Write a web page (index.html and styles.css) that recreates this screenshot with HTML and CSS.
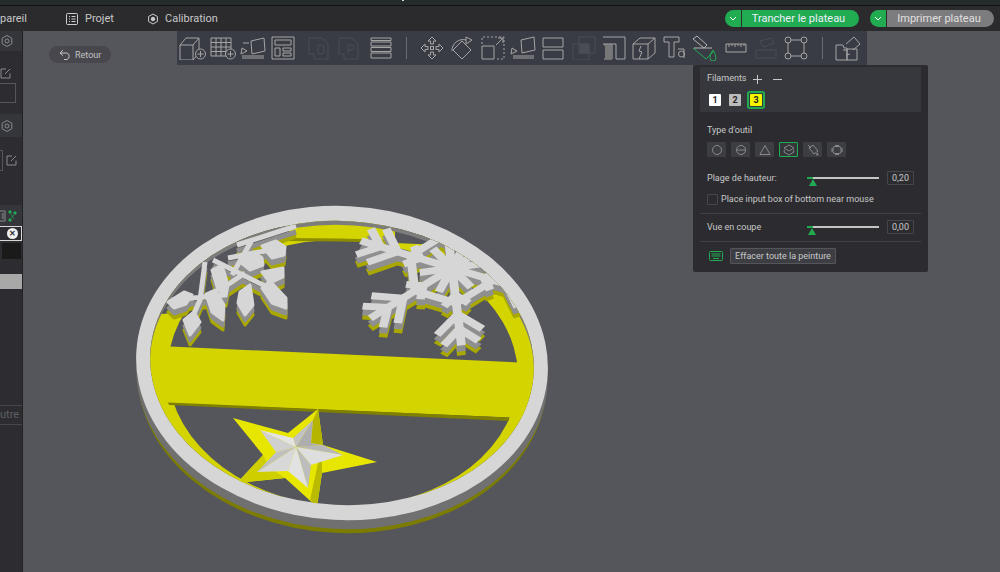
FILE: index.html
```html
<!DOCTYPE html>
<html lang="fr">
<head>
    <meta charset="UTF-8">
    <title>Peinture</title>
    <link rel="stylesheet" href="styles.css">
</head>
<body>
    <div class="topstrip"><span class="topmark"></span></div>
    <div class="menubar">
        <div class="tab tab-device">pareil</div>
        <div class="tab tab-project">
            <svg width="14" height="14" viewBox="0 0 14 14" class="ico"><rect x="1.5" y="1.5" width="11" height="11" rx="1"/><path d="M4 4.500h1M6.500 4.500h4M4 7h1M6.500 7h4M4 9.500h1M6.500 9.500h4"/></svg>
            Projet
        </div>
        <div class="tab tab-calib">
            <svg width="12" height="12" viewBox="0 0 12 12" class="ico"><path d="M6 1l4.400 2.500v5L6 11 1.600 8.500v-5z"/><circle cx="6" cy="6" r="1.800" fill="#ccc"/></svg>
            Calibration
        </div>
        <div class="spacer"></div>
        <div class="splitbtn slice">
            <span class="chev"><svg width="8" height="5" viewBox="0 0 8 5"><path d="M1 1l3 3 3-3" fill="none" stroke="#fff"/></svg></span>
            <span class="label">Trancher le plateau</span>
        </div>
        <div class="splitbtn print">
            <span class="chev"><svg width="8" height="5" viewBox="0 0 8 5"><path d="M1 1l3 3 3-3" fill="none" stroke="#fff"/></svg></span>
            <span class="label">Imprimer plateau</span>
        </div>
    </div>

    <div class="main">
        <div class="sidebar">
            <div class="side-head">
                <svg width="14" height="14" viewBox="0 0 14 14" class="side-ico"><path d="M7 1.500l4.800 2.700v5.600L7 12.500 2.200 9.800V4.200z"/><circle cx="7" cy="7" r="2"/></svg>
            </div>
            <div class="side-block one">
                <div class="side-edit">
                    <svg width="12" height="12" viewBox="0 0 12 12" class="side-ico"><path d="M10 6.500V11H1V2h5M5 7l5-5"/></svg>
                </div>
                <div class="side-box"></div>
            </div>
            <div class="side-head two">
                <svg width="14" height="14" viewBox="0 0 14 14" class="side-ico"><path d="M7 1.500l4.800 2.700v5.600L7 12.500 2.200 9.800V4.200z"/><circle cx="7" cy="7" r="2"/></svg>
            </div>
            <div class="side-block three">
                <div class="side-stub"></div>
                <svg width="12" height="12" viewBox="0 0 12 12" class="side-ico"><path d="M10 6.500V11H1V2h5M5 7l5-5"/></svg>
            </div>
            <div class="side-head four">
                <svg width="6" height="12" viewBox="0 0 6 12" class="side-ico"><path d="M0 1h5v10H0M1.500 4H4M1.500 6H4M1.500 8H4"/></svg>
                <svg width="9" height="12" viewBox="0 0 9 12" class="side-green"><circle cx="2" cy="2" r="1.300"/><circle cx="7" cy="3" r="1.300"/><circle cx="2" cy="10" r="1.300"/><path d="M3 4l3 5M6 5L3 8"/></svg>
            </div>
            <div class="side-chip"><span class="chip-x">&#10005;</span></div>
            <div class="side-black"><div class="black-box"></div></div>
            <div class="side-gray"></div>
            <div class="side-fill"></div>
            <div class="side-other">utre</div>
            <div class="side-end"></div>
        </div>

        <div class="viewport">
            <svg class="scene" viewBox="23 31 977 541" width="977" height="541">
                <defs>
                    <clipPath id="insideRing"><ellipse cx="342" cy="363" rx="192" ry="142" transform="rotate(3 342 363)"/></clipPath>
                    <g id="arm">
                        <path d="M0 0H97M58 0L80 -22M58 0L80 22M76 0L94 -17M76 0L94 17M44 0L22 38M0 0L27 16M34 0L46 -12M34 0L46 12"/>
                    </g>
                    <g id="bigFlake">
                        <use href="#arm"/><use href="#arm" transform="rotate(60)"/><use href="#arm" transform="rotate(120)"/>
                        <use href="#arm" transform="rotate(180)"/><use href="#arm" transform="rotate(240)"/><use href="#arm" transform="rotate(300)"/>
                        <circle r="14" stroke="none"/>
                    </g>
                    <g id="leaves">
                        <path fill="none" stroke-width="5" d="M237 245L296 226M213 260L273 290M252 240L232 275M245 273L220 290M205 262L200 300L192 318M172 300L225 295M270 250L228 258"/>
                        <path stroke-width="3" stroke-linejoin="round" d="M262 246L276 241L285 247L284 255L272 258ZM240 262L255 252L262 258L263 265L250 270ZM262 272L283 268L283 277L270 283ZM212 270L222 265L228 285L226 296L218 290ZM262 288L270 281L286 298L286 308L272 303ZM240 292L250 285L253 305L245 315L238 303ZM206 294L215 290L224 305L223 320L212 312ZM168 302L184 292L192 295L186 304L174 308ZM184 320L194 312L200 322L190 335Z"/>
                    </g>
                    <g id="flakes">
                        <use href="#leaves"/>
                        <use href="#bigFlake" transform="matrix(-.94 -.28 -.43 .76 452 268)" stroke-width="8.500"/>
                    </g>
                </defs>

                <!-- plate sides -->
                <ellipse cx="342" cy="377" rx="205" ry="156" transform="rotate(3 342 377)" fill="#7c7c00"/>
                <ellipse cx="342" cy="373" rx="206" ry="156" transform="rotate(3 342 373)" fill="#707070"/>
                <ellipse cx="342" cy="363" rx="206" ry="157" transform="rotate(3 342 363)" fill="#d6d6d6"/>

                <!-- inside of the ring -->
                <ellipse cx="342" cy="363" rx="192" ry="142" transform="rotate(3 342 363)" fill="#55555c"/>
                <g clip-path="url(#insideRing)">
                    <path fill-rule="evenodd" fill="#d4d400" d="M120 200H560V520H120ZM168 373a175 133 3 1 0 350 0a175 133 3 1 0 -350 0Z"/>
                    <path d="M285 238Q340 238 396 240V243Q340 241 285 241Z" fill="#8d8d00"/>
                    <!-- no yellow behind the flakes -->
                    <path d="M130 200H285L290 238L185 312L140 316ZM395 200H560V293H490L440 245L395 243Z" fill="#55555c"/>
                    <path fill-rule="evenodd" fill="#7d7d7d" d="M120 180H570V540H120ZM150 367a192 142 3 1 0 384 0a192 142 3 1 0 -384 0Z"/>
                    <path d="M160 346L530 363L525 418L160 403Z" fill="#d4d400"/>
                    <path d="M168 402.500L509 417.500V421L169 405Z" fill="#7f7f00"/>
                    <g>
                        <use href="#flakes" y="10" fill="#a8a800" stroke="#a8a800"/>
                        <use href="#flakes" y="6" fill="#8f8f8f" stroke="#8f8f8f"/>
                        <use href="#flakes" fill="#d6d6d6" stroke="#d6d6d6"/>
                    </g>
                    <!-- star -->
                    <path d="M318 409L323 445L377 462L322 473L317 507L285 478L237 483L263 455L233 418L288 433Z" fill="#e6e600"/>
                    <path d="M318 409L323 445L311 443L313 420Z" fill="#b5b500"/>
                    <path d="M322 473L317 507L310 500L322 445Z" fill="#b5b500" opacity=".9"/>
                    <path d="M237 483L263 455L270 468L285 478Z" fill="#cfcf00"/>
                    <path d="M313 420L296 447L293 438Z" fill="#c2c2c2"/>
                    <path d="M313 420L296 447L323 445L311 443Z" fill="#aeaeae"/>
                    <path d="M343 455L296 447L323 445Z" fill="#b8b8b8"/>
                    <path d="M343 455L296 447L311 465Z" fill="#dedede"/>
                    <path d="M308 488L296 447L311 465Z" fill="#bdbdbd"/>
                    <path d="M308 488L296 447L288 471Z" fill="#e2e2e2"/>
                    <path d="M257 472L296 447L288 471Z" fill="#d8d8d8"/>
                    <path d="M257 472L296 447L276 452Z" fill="#c0c0c0"/>
                    <path d="M260 430L296 447L276 452Z" fill="#d0d0d0"/>
                    <path d="M260 430L296 447L293 438Z" fill="#e4e4e4"/>
                </g>
            </svg>

            <div class="back"><svg width="13" height="11" viewBox="0 0 13 11" class="ico-back"><path d="M4 1L1 4l3 2.500M1 4h7a3.500 3.500 0 0 1 0 6.500H5"/></svg>Retour</div>

            <div class="toolbar">
                <div class="tool"><svg width="27" height="24" viewBox="0 0 27 24"><path d="M1 9l6-7h13v15l-6 7H1zM1 9h13v15M14 9l6-7"/><circle cx="21.500" cy="18" r="5" fill="#393c44"/><path d="M21.500 15v6M18.500 18h6"/></svg></div>
                <div class="tool"><svg width="26" height="24" viewBox="0 0 26 24"><path d="M1 2h20v18H1zM6 2v18M11 2v18M16 2v18M1 6.500h20M1 11h20M1 15.500h20"/><circle cx="20.500" cy="18" r="5" fill="#393c44"/><path d="M20.500 15v6M17.500 18h6"/></svg></div>
                <div class="tool"><svg width="26" height="24" viewBox="0 0 26 24"><path d="M11 5l13-3 1 13-13 3zM2 20h22M2 22h22M2 12l5 3-6 3zM3 7h6"/></svg></div>
                <div class="tool"><svg width="24" height="24" viewBox="0 0 24 24"><path d="M1 1h22v22H1zM4 4h16v5H4zM4 12h5v8H4zM12 12h8v3h-8zM12 17h8v3h-8z"/></svg></div>
                <div class="tool off first-off"><svg width="24" height="24" viewBox="0 0 24 24"><path d="M1 2h13l6 6v15H6V18H1zM4 18h2"/><path d="M10 9h3a3 3 0 0 1 3 3v3a3 3 0 0 1-3 3h-3z"/></svg></div>
                <div class="tool off"><svg width="24" height="24" viewBox="0 0 24 24"><path d="M1 2h13l6 6v15H6V18H1z"/><path d="M10 18V9h4a2.500 2.500 0 0 1 0 5h-4"/></svg></div>
                <div class="tool"><svg width="22" height="24" viewBox="0 0 22 24"><path d="M1 2h20v2.500H1zM1 6h20v4H1zM1 11.500h20v4H1zM1 17h20v5H1z"/></svg></div>
                <div class="tool-sep"></div>
                <div class="tool"><svg width="24" height="24" viewBox="0 0 24 24"><path d="M12 1l4 4h-2.500v3h-3V5H8zM12 23l4-4h-2.500v-3h-3v3H8zM1 12l4-4v2.500h3v3H5V16zM23 12l-4-4v2.500h-3v3h3V16z"/><rect x="10.500" y="10.500" width="3" height="3"/></svg></div>
                <div class="tool"><svg width="26" height="24" viewBox="0 0 26 24"><path d="M13 5l9 9-9 9-9-9zM3 15A11 11 0 0 1 17 4M17 1l6 3-6 4z"/></svg></div>
                <div class="tool"><svg width="24" height="24" viewBox="0 0 24 24"><path d="M1 10h12v13H1z"/><path stroke-dasharray="2 2" d="M1 8V1h22v22h-8"/><path d="M15 9l7-7M17 2h5v5"/></svg></div>
                <div class="tool"><svg width="26" height="24" viewBox="0 0 26 24"><path d="M11 4l13-3 1 13-13 3zM3 20h21M3 22h21M2 12l5 3-6 3z"/></svg></div>
                <div class="tool"><svg width="22" height="24" viewBox="0 0 22 24"><path d="M1 2h20v9H1zM1 14h20v9H1z"/></svg></div>
                <div class="tool off"><svg width="24" height="24" viewBox="0 0 24 24"><path d="M1 8h16v16H1zM7 1h16v16H7z"/><rect x="8" y="8" width="9" height="9" fill="#4a4d55"/></svg></div>
                <div class="tool"><svg width="24" height="24" viewBox="0 0 24 24"><path d="M1 1h22v22H14V8h-4M10 8H1"/><path d="M2 9h8v14H2"/><path d="M3 10h7v13H3z" fill="#777" stroke="none"/></svg></div>
                <div class="tool"><svg width="24" height="24" viewBox="0 0 24 24"><path d="M1 8l7-6h15v15l-7 6H1zM1 8h15v15M16 8l7-6M9 10l-2 5 3 1-3 7"/></svg></div>
                <div class="tool"><svg width="24" height="24" viewBox="0 0 24 24"><path d="M1 1h15v5h-5v15H6V6H1z"/><circle cx="18.500" cy="18" r="3"/><path d="M15 13h6v9"/></svg></div>
                <div class="tool paint"><svg width="28" height="26" viewBox="0 0 28 26"><path d="M6 1l10 9-3 3L2 4z" stroke="#b5b5b5"/><path d="M2 13L15 24 22 17" stroke="#22ac52"/><path d="M3 13H21" stroke="#b5b5b5"/><path d="M22 15q-4 5-3 8a3 3 0 0 0 6 0q0-3-3-8z" stroke="#22ac52"/></svg></div>
                <div class="tool"><svg width="22" height="24" viewBox="0 0 22 24"><path d="M1 8h20v8H1zM4 8v3M7 8v2M10 8v3M13 8v2M16 8v3M19 8v2"/></svg></div>
                <div class="tool off"><svg width="24" height="24" viewBox="0 0 24 24"><path d="M2 14h20v8H2zM6 5l11-3 3 5-11 4z"/></svg></div>
                <div class="tool"><svg width="24" height="24" viewBox="0 0 24 24"><rect x="4" y="4" width="16" height="16"/><circle cx="4" cy="4" r="3" fill="#393c44"/><circle cx="20" cy="4" r="3" fill="#393c44"/><circle cx="4" cy="20" r="3" fill="#393c44"/><circle cx="20" cy="20" r="3" fill="#393c44"/></svg></div>
                <div class="tool-sep"></div>
                <div class="tool"><svg width="26" height="26" viewBox="0 0 26 26"><path d="M1 10h7l1 3h3v12H1zM12 14h10v11H12zM11 9l8-7 6 7-7 6M8 15h4M11 20l4-1"/></svg></div>
            </div>

            <div class="panel">
                <div class="filaments">
                    <div class="fil-head">
                        <span>Filaments</span>
                        <svg width="9" height="9" viewBox="0 0 9 9" class="fil-sign plus"><path d="M4.500 0v9M0 4.500h9"/></svg>
                        <svg width="9" height="9" viewBox="0 0 9 9" class="fil-sign"><path d="M0 4.500h9"/></svg>
                    </div>
                    <div class="fil-list">
                        <span class="swatch white">1</span>
                        <span class="swatch grey">2</span>
                        <span class="swatch-ring"><span class="swatch yellow">3</span></span>
                    </div>
                </div>

                <div class="tool-type">
                    <div class="caption">Type d'outil</div>
                    <div class="type-row">
                        <span class="type-btn"><svg width="12" height="12" viewBox="0 0 12 12"><circle cx="6" cy="6" r="4.500"/></svg></span>
                        <span class="type-btn"><svg width="12" height="12" viewBox="0 0 12 12"><circle cx="6" cy="6" r="4.500"/><path d="M1.500 6h9"/></svg></span>
                        <span class="type-btn"><svg width="12" height="12" viewBox="0 0 12 12"><path d="M6 1.500l5 9H1z"/></svg></span>
                        <span class="type-btn on"><svg width="12" height="12" viewBox="0 0 12 12"><path d="M6 1l5 3-5 3-5-3zM1.500 6L1 8l5 3 5-3-.5-2"/></svg></span>
                        <span class="type-btn"><svg width="12" height="12" viewBox="0 0 12 12"><path d="M2 4l4-3 5 6-4 3zM1 1l3 3M10.500 9l.5 2-1.500 0z"/></svg></span>
                        <span class="type-btn"><svg width="12" height="12" viewBox="0 0 12 12"><rect x="2" y="2.500" width="8" height="7" rx="2"/><path d="M1 4v4M11 4v4M4 1.500h4M4 10.500h4"/></svg></span>
                    </div>
                </div>

                <div class="slider-row height">
                    <span class="slider-label">Plage de hauteur:</span>
                    <div class="slider"><span class="thumb" style="left: 6px"></span></div>
                    <span class="value">0,20</span>
                </div>
                <div class="check-row"><span class="check"></span>Place input box of bottom near mouse</div>
                <div class="rule"></div>
                <div class="slider-row cut">
                    <span class="slider-label">Vue en coupe</span>
                    <div class="slider"><span class="thumb" style="left: 5px"></span></div>
                    <span class="value">0,00</span>
                </div>
                <div class="rule"></div>
                <div class="bottom-row">
                    <svg width="14" height="10" viewBox="0 0 14 10" class="kbd"><rect x=".5" y=".5" width="13" height="9" rx="1"/><path d="M2.500 3h9M2.500 5h9M4 7.500h6"/></svg>
                    <span class="clear-btn">Effacer toute la peinture</span>
                </div>
            </div>
        </div>
    </div>
</body>
</html>
```

FILE: styles.css
```css
* {
    box-sizing: border-box;
}

html, body {
    margin: 0;
    width: 1000px;
    height: 572px;
    overflow: hidden;
    background: #55555c;
    font-family: Roboto, "Noto Sans", sans-serif;
    color: #c8c8c8;
}

.topstrip {
    position: relative;
    height: 6px;
    background: #252b2d;
    border-bottom: 1px solid #101213;
}

.topmark {
    position: absolute;
    left: 402px;
    top: 0;
    width: 2px;
    height: 1px;
    background: #d8d8d8;
}

.menubar {
    display: flex;
    align-items: center;
    height: 25px;
    background: #2b2b2e;
    font-size: 11px;
    overflow: hidden;
}

.tab {
    display: flex;
    align-items: center;
    gap: 7px;
    white-space: nowrap;
}

.tab-device {
    width: 65px;
}

.tab-project {
    width: 82px;
    gap: 6px;
}

.tab-calib {
    gap: 6px;
}

.ico {
    fill: none;
    stroke: #ccc;
}

.spacer {
    flex: 1;
}

.splitbtn {
    display: flex;
    height: 17px;
    border-radius: 9px;
    overflow: hidden;
    margin-top: -1px;
}

.splitbtn .chev {
    display: flex;
    align-items: center;
    justify-content: center;
    width: 17px;
    background: #22ac52;
    border-right: 1px solid #2b2b2e;
}

.splitbtn .label {
    display: flex;
    align-items: center;
    justify-content: center;
}

.slice {
    width: 134px;
    margin-right: 11px;
}

.slice .label {
    flex: 1;
    padding-right: 4px;
    background: #22ac52;
    color: #eef;
}

.print {
    width: 124px;
    margin-right: 6px;
}

.print .label {
    flex: 1;
    padding-right: 3px;
    background: #7c7c7e;
    color: #e0e0e0;
}

.main {
    display: flex;
    height: 541px;
}

.sidebar {
    display: flex;
    flex-direction: column;
    flex: 0 0 23px;
    min-width: 0;
    overflow: hidden;
    background: #2d2d31;
    border-right: 1px solid #222225;
}

.side-head {
    display: flex;
    align-items: center;
    justify-content: flex-start;
    height: 20px;
    flex: none;
    background: #35363b;
}

.side-ico {
    fill: none;
    stroke: #8a8a8e;
    flex: none;
}

.side-block.one {
    height: 63px;
    flex: none;
    padding: 13px 0 0 0;
}

.side-edit {
    height: 19px;
}

.side-box {
    width: 16px;
    height: 20px;
    border: 1px solid #55555a;
    border-left: 0;
}

.side-head.two {
    height: 23px;
}

.side-block.three {
    display: flex;
    gap: 3px;
    align-items: center;
    height: 68px;
    flex: none;
    padding-bottom: 22px;
}

.side-stub {
    width: 3px;
    height: 21px;
    border: 1px solid #55555a;
    border-left: 0;
}

.side-head.four {
    height: 21px;
    gap: 2px;
}

.side-green {
    fill: #22ac52;
    stroke: #22ac52;
    stroke-width: .7;
    flex: none;
}

.side-chip {
    display: flex;
    align-items: center;
    justify-content: flex-end;
    height: 15px;
    flex: none;
    padding-right: 3px;
    border: 1px solid #d8d8d8;
    border-left: 0;
    background: #2d2d31;
}

.chip-x {
    display: flex;
    align-items: center;
    justify-content: center;
    width: 11px;
    height: 11px;
    border-radius: 50%;
    background: #f0f0f0;
    color: #333;
    font-size: 8px;
    font-weight: 700;
}

.side-black {
    height: 33px;
    flex: none;
    padding: 2px 0 0 2px;
}

.black-box {
    width: 19px;
    height: 16px;
    background: #1a1a1a;
}

.side-gray {
    height: 15px;
    flex: none;
    background: #a8a8a8;
}

.side-fill {
    flex: 0 0 116px;
}

.side-other {
    height: 20px;
    flex: none;
    line-height: 18px;
    border-top: 1px solid #47474b;
    border-bottom: 1px solid #47474b;
    color: #5d5d62;
    font-size: 11px;
}

.viewport {
    position: relative;
    flex: 1;
    min-width: 0;
    background: #55555c;
}

.scene {
    position: absolute;
    left: 0;
    top: 0;
}

.back {
    position: absolute;
    left: 26px;
    top: 15px;
    display: flex;
    align-items: center;
    gap: 3px;
    width: 62px;
    height: 17px;
    padding-left: 10px;
    border-radius: 9px;
    background: #47474d;
    color: #c4c4c4;
    font-size: 9px;
}

.ico-back {
    fill: none;
    stroke: #c4c4c4;
}

.toolbar {
    position: absolute;
    left: 154px;
    top: 0;
    display: flex;
    align-items: center;
    width: 690px;
    height: 34px;
    background: #393c44;
}

.tool {
    display: flex;
    justify-content: center;
    flex: 0 0 30.4px;
}

.tool svg {
    fill: none;
    stroke: #a5a5a5;
    stroke-width: 1;
}

.tool.off svg {
    stroke: #4a4d55;
}

.first-off {
    margin-left: 6px;
}

.tool-sep {
    flex: 0 0 20.8px;
    height: 22px;
    background: linear-gradient(#6a6c72, #6a6c72) center / 1px 100% no-repeat;
}

.panel {
    position: absolute;
    left: 670px;
    top: 34px;
    width: 235px;
    height: 207px;
    padding: 2px 7px 0;
    border-radius: 2px;
    background: #2c2c30;
    font-size: 9px;
}

.filaments {
    height: 45px;
    margin-bottom: 12px;
    padding: 4px 7px 0;
    background: #37383e;
    border-radius: 2px 0 0 2px;
}

.fil-head {
    display: flex;
    align-items: center;
    height: 14px;
}

.fil-sign {
    fill: none;
    stroke: #c8c8c8;
    margin-left: 11px;
    margin-top: 3px;
}

.fil-sign.plus {
    margin-left: 7px;
}

.fil-list {
    display: flex;
    align-items: center;
    margin-top: 6px;
}

.swatch {
    display: flex;
    align-items: center;
    justify-content: center;
    width: 12px;
    height: 12px;
    border-radius: 1px;
    color: #222;
    font-size: 9px;
    font-weight: 700;
}

.swatch.white {
    background: #fff;
    margin-left: 2px;
}

.swatch.grey {
    background: #bcbcbc;
    margin-left: 8px;
}

.swatch-ring {
    display: flex;
    align-items: center;
    justify-content: center;
    width: 18px;
    height: 18px;
    margin-left: 6px;
    border: 2px solid #22ac52;
    border-radius: 3px;
}

.swatch.yellow {
    background: #f5f500;
}

.tool-type {
    padding-left: 7px;
}

.caption {
    height: 12px;
    line-height: 12px;
}

.type-row {
    display: flex;
    gap: 5px;
    margin-top: 6px;
}

.type-btn {
    display: flex;
    align-items: center;
    justify-content: center;
    width: 19px;
    height: 15px;
    border-radius: 1px;
    background: #3d3e43;
}

.type-btn svg {
    fill: none;
    stroke: #9a9a9a;
    stroke-width: .8;
}

.type-btn.on {
    border: 1px solid #22ac52;
    background: #34373a;
}

.slider-row {
    display: flex;
    align-items: center;
    padding-left: 7px;
    height: 14px;
}

.slider-row.height {
    margin-top: 14px;
}

.slider-label {
    width: 100px;
}

.slider {
    position: relative;
    width: 72px;
    height: 2px;
    background: linear-gradient(to right, #22ac52 6px, #c4c4c4 6px);
}

.thumb {
    position: absolute;
    top: 2px;
    margin-left: -4px;
    border-left: 4px solid transparent;
    border-right: 4px solid transparent;
    border-bottom: 7px solid #22ac52;
}

.value {
    display: flex;
    align-items: center;
    justify-content: center;
    width: 27px;
    height: 14px;
    margin-left: 8px;
    border: 1px solid #46464b;
    border-radius: 1px;
}

.check-row {
    display: flex;
    align-items: center;
    gap: 3px;
    height: 12px;
    margin-top: 8px;
    padding-left: 7px;
}

.check {
    width: 11px;
    height: 11px;
    border: 1px solid #46464b;
    border-radius: 1px;
}

.rule {
    height: 1px;
    background: #414146;
    margin-top: 8px;
}

.slider-row.cut {
    margin-top: 6px;
}

.slider-row.cut + .rule {
    margin-top: 7px;
}

.bottom-row {
    display: flex;
    align-items: center;
    gap: 7px;
    margin-top: 6px;
    padding-left: 9px;
}

.kbd {
    fill: none;
    stroke: #22ac52;
}

.clear-btn {
    display: flex;
    align-items: center;
    justify-content: center;
    width: 106px;
    height: 16px;
    border: 1px solid #55555a;
    border-radius: 1px;
    background: #3d3e43;
}
```
